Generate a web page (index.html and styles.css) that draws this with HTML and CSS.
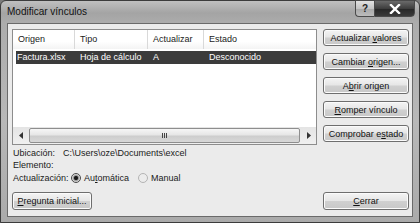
FILE: index.html
```html
<!DOCTYPE html>
<html lang="es">
<head>
<meta charset="utf-8">
<title>Modificar vínculos</title>
<link rel="stylesheet" href="styles.css">
</head>
<body>
<div class="window">
  <div class="titlebar">
    <span class="title">Modificar vínculos</span>
    <div class="caption-btns">
      <div class="cap help">?</div>
      <div class="cap close">
        <svg width="12" height="10" viewBox="0 0 12 10"><path d="M2 1 L10 9 M10 1 L2 9" stroke="#fff" stroke-width="2.4" stroke-linecap="square"/></svg>
      </div>
    </div>
  </div>
  <div class="client">
    <div class="top">
      <div class="listview">
        <div class="lv-header">
          <div class="hcell c1">Origen</div>
          <div class="hcell c2">Tipo</div>
          <div class="hcell c3">Actualizar</div>
          <div class="hcell c4">Estado</div>
        </div>
        <div class="lv-row selected">
          <div class="cell c1 first">Factura.xlsx</div>
          <div class="cell c2">Hoja de cálculo</div>
          <div class="cell c3">A</div>
          <div class="cell c4">Desconocido</div>
        </div>
        <div class="lv-fill"></div>
        <div class="hscroll">
          <div class="sb-btn">
            <svg width="4" height="7" viewBox="0 0 4 7"><path d="M4 0 L0 3.5 L4 7 Z" fill="#333"/></svg>
          </div>
          <div class="sb-track">
            <div class="sb-thumb"><span class="grip"></span><span class="grip"></span><span class="grip"></span></div>
          </div>
          <div class="sb-btn">
            <svg width="4" height="7" viewBox="0 0 4 7"><path d="M0 0 L4 3.5 L0 7 Z" fill="#333"/></svg>
          </div>
        </div>
      </div>
      <div class="btn-col">
        <div class="btn"><span>Actualizar <u>v</u>alores</span></div>
        <div class="btn"><span>Cambiar <u>o</u>rigen...</span></div>
        <div class="btn"><span>A<u>b</u>rir origen</span></div>
        <div class="btn"><span><u>R</u>omper vínculo</span></div>
        <div class="btn"><span>Comprobar e<u>s</u>tado</span></div>
      </div>
    </div>
    <div class="info">
      <div class="label">Ubicación:</div>
      <div class="value">C:\Users\oze\Documents\excel</div>
      <div class="label">Elemento:</div>
      <div class="value"></div>
      <div class="label">Actualización:</div>
      <div class="value radios">
        <span class="radio checked"></span><span class="rlabel">Au<u>t</u>omática</span>
        <span class="radio disabled"></span><span class="rlabel">Manual</span>
      </div>
    </div>
    <div class="bottom">
      <div class="btn btn-ask"><span><u>P</u>regunta inicial...</span></div>
      <div class="btn btn-close"><span><u>C</u>errar</span></div>
    </div>
  </div>
</div>
</body>
</html>
```
FILE: styles.css
```css
html, body {
  margin: 0;
  padding: 0;
  background: #7a7a7a;
}
body {
  width: 420px;
  height: 223px;
  overflow: hidden;
  font-family: "Liberation Sans", Arial, sans-serif;
  font-size: 9px;
  color: #1a1a1a;
}
.window {
  width: 420px;
  height: 223px;
  box-sizing: border-box;
  border: 1px solid #3c3c3c;
  border-radius: 6px 6px 0 0;
  background: linear-gradient(to bottom, #c0c0c0 0px, #a4a4a4 12px, #acacac 22px, #b8b8b8 120px, #aaaaaa 223px);
  display: flex;
  flex-direction: column;
}
.titlebar {
  height: 22px;
  flex: none;
  display: flex;
  align-items: flex-start;
  padding-left: 6px;
}
.title {
  font-size: 10px;
  padding-top: 5px;
  color: #111;
}
.caption-btns {
  margin-left: auto;
  margin-right: 4px;
  display: flex;
  margin-top: -1px;
}
.cap {
  height: 17px;
  box-sizing: border-box;
  border: 1px solid #4a4a4a;
  display: flex;
  align-items: center;
  justify-content: center;
}
.help {
  width: 19px;
  border-radius: 0 0 0 4px;
  border-right: none;
  background: linear-gradient(to bottom, #e2e2e2, #c4c4c4 50%, #a8a8a8 51%, #bcbcbc);
  font-weight: bold;
  font-size: 10px;
  color: #222;
}
.close {
  width: 41px;
  border-radius: 0 0 4px 0;
  background: linear-gradient(to bottom, #6a6a6a, #3e3e3e 50%, #262626 51%, #3a3a3a);
}
.client {
  flex: 1;
  margin: 0 6px 5px 6px;
  box-sizing: border-box;
  border: 1px solid #6a6a6a;
  background: #ebebeb;
  padding: 5px 3px 6px 4px;
  display: flex;
  flex-direction: column;
}
.top {
  display: flex;
  gap: 6px;
}
.listview {
  width: 305px;
  height: 116px;
  box-sizing: border-box;
  border: 1px solid #8d8d8d;
  background: #fff;
  display: flex;
  flex-direction: column;
}
.lv-header {
  display: flex;
  height: 19px;
  flex: none;
  background: linear-gradient(to bottom, #ffffff, #ffffff 60%, #f4f4f4);
}
.hcell {
  box-sizing: border-box;
  border-right: 1px solid #d9d9d9;
  padding-left: 5px;
  line-height: 19px;
}
.c1 { width: 62px; }
.c2 { width: 73px; }
.c3 { width: 56px; }
.c4 { flex: 1; border-right: none; }
.lv-row {
  display: flex;
  height: 13px;
  margin: 2px 0 0 3px;
  line-height: 13px;
}
.lv-row.selected {
  background: #3b3b3b;
  color: #fff;
}
.cell {
  box-sizing: border-box;
  padding-left: 5px;
  white-space: nowrap;
}
.cell.first {
  width: 59px;
  padding-left: 1px;
}
.lv-fill {
  flex: 1;
}
.hscroll {
  height: 17px;
  flex: none;
  display: flex;
  background: linear-gradient(to bottom, #e4e4e4, #f0f0f0);
}
.sb-btn {
  width: 15px;
  display: flex;
  align-items: center;
  justify-content: center;
}
.sb-track {
  flex: 1;
  padding: 1px 1px;
  display: flex;
}
.sb-thumb {
  flex: 1;
  box-sizing: border-box;
  border: 1px solid #8e8e8e;
  border-radius: 2px;
  background: linear-gradient(to bottom, #f6f6f6, #e6e6e6 45%, #cdcdcd 55%, #d8d8d8);
  display: flex;
  align-items: center;
  justify-content: center;
  gap: 1px;
}
.grip {
  width: 1px;
  height: 5px;
  background: #444;
}
.btn-col {
  display: flex;
  flex-direction: column;
  gap: 7px;
}
.btn {
  width: 86px;
  height: 17px;
  box-sizing: border-box;
  border: 1px solid #6e6e6e;
  border-radius: 3px;
  background: linear-gradient(to bottom, #f4f4f4, #e6e6e6 48%, #d0d0d0 52%, #c8c8c8);
  box-shadow: inset 0 0 0 1px #fbfbfb;
  display: flex;
  align-items: center;
  justify-content: center;
  color: #111;
  white-space: nowrap;
}
.info {
  margin-top: 2px;
  display: grid;
  grid-template-columns: 51px 1fr;
  grid-auto-rows: 12px;
  line-height: 12px;
}
.info .label:nth-last-child(2),
.info .radios {
  height: 14px;
  line-height: 14px;
}
.label {
  padding-left: 1px;
}
.radios {
  display: flex;
  align-items: center;
}
.radio {
  width: 10px;
  height: 10px;
  box-sizing: border-box;
  border-radius: 50%;
  border: 1px solid #4a4a4a;
  background: radial-gradient(circle, #ffffff 0, #dcdcdc 100%);
  margin-left: 8px;
  margin-right: 3px;
  flex: none;
}
.radio.checked {
  background: radial-gradient(circle, #111 0, #222 30%, #9a9a9a 45%, #e8e8e8 70%, #cfcfcf 100%);
}
.radio.disabled {
  border-color: #b4b4b4;
  background: #ececec;
  margin-left: 9px;
}
.bottom {
  margin-top: auto;
  display: flex;
  justify-content: space-between;
}
.bottom .btn {
  height: 18px;
}
.btn-ask {
  width: 80px;
}
```
